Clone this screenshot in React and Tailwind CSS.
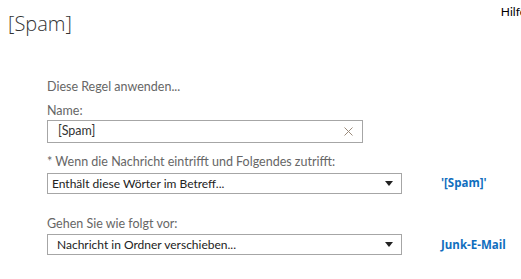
const font = { fontFamily: 'Lato, "Open Sans", "Liberation Sans", sans-serif' };

function Caret() {
  return (
    <svg width="8" height="5" viewBox="0 0 8 5" className="shrink-0">
      <path d="M0 0h8L4 5z" fill="#222" />
    </svg>
  );
}

function Select({ value, pad }) {
  return (
    <div
      className={`flex h-[21px] items-center justify-between border border-[#a6a6a6] bg-white pr-[8px] ${pad}`}
    >
      <span className="text-[12px] leading-none text-[#222]">{value}</span>
      <Caret />
    </div>
  );
}

export default function App() {
  return (
    <div
      className="h-[279px] w-[521px] overflow-hidden bg-white"
      style={font}
    >
      <div className="flex items-start justify-between">
        <h1
          className="pl-[8px] pt-[10px] text-[20px] font-light leading-[28px] text-[#333]"
          style={{ fontFamily: '"Open Sans", sans-serif' }}
        >
          [Spam]
        </h1>
        <a className="mr-[-5px] pt-[4px] text-[12px] leading-[16px] text-black">
          Hilfe
        </a>
      </div>

      <div className="pl-[47px] pt-[41px]">
        <div className="w-[355px]">
          <p className="text-[12.5px] leading-[16px] text-[#666]">
            Diese Regel anwenden...
          </p>
          <p className="mt-[8px] text-[12.5px] leading-[16px] text-[#666]">
            Name:
          </p>
          <div className="mt-[1px] flex h-[23px] w-[316px] items-center justify-between border border-[#a6a6a6] pl-[10px] pr-[9px]">
            <span className="text-[12.5px] leading-none text-[#333]">[Spam]</span>
            <svg width="9" height="9" viewBox="0 0 9 9">
              <path d="M0.5 0.5l8 8M8.5 0.5l-8 8" stroke="#9a8a7a" strokeWidth="1" />
            </svg>
          </div>
        </div>

        <div className="mt-[11px] flex items-end">
          <div className="w-[355px]">
            <p className="text-[12.5px] leading-[16px] text-[#666]">
              * Wenn die Nachricht eintrifft und Folgendes zutrifft:
            </p>
            <div className="mt-[3px]">
              <Select value="Enthält diese Wörter im Betreff..." pad="pl-[4px]" />
            </div>
          </div>
          <span
            className="mb-[3px] ml-[39px] text-[11.5px] font-bold leading-[16px] text-[#106ebe]"
            style={{ fontFamily: '"Open Sans", sans-serif' }}
          >
            '[Spam]'
          </span>
        </div>

        <div className="mt-[22px] flex items-end">
          <div className="w-[355px]">
            <p className="text-[12.5px] leading-[16px] text-[#666]">
              Gehen Sie wie folgt vor:
            </p>
            <div className="mt-[2px]">
              <Select value="Nachricht in Ordner verschieben..." pad="pl-[9px]" />
            </div>
          </div>
          <span
            className="mb-[2px] ml-[39px] text-[11.5px] font-bold leading-[16px] text-[#106ebe]"
            style={{ fontFamily: '"Open Sans", sans-serif' }}
          >
            Junk-E-Mail
          </span>
        </div>
      </div>
    </div>
  );
}
